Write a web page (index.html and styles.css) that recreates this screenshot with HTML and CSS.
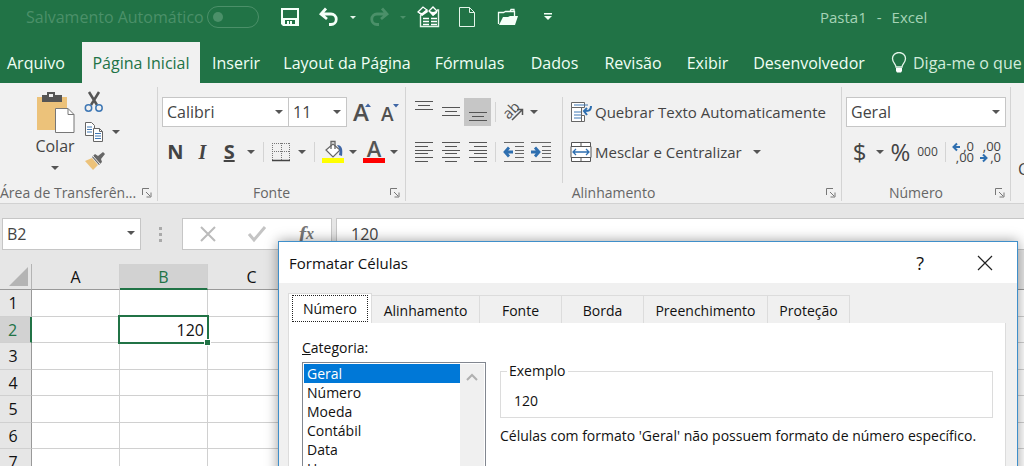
FILE: index.html
```html
<!DOCTYPE html>
<html lang="pt-BR">
<head>
<meta charset="utf-8">
<title>Pasta1 - Excel</title>
<link rel="stylesheet" href="styles.css">
</head>
<body>
<div class="app">
  <header class="titlebar">
    <label class="autosave">Salvamento Automático <input type="checkbox" class="toggle" disabled></label>
    <div class="quick">
      <button class="q q-save" aria-label="Salvar"><svg width="20" height="20" viewBox="0 0 20 20"><path fill="#f4fff8" fill-rule="evenodd" d="M1 1h18v18H3l-2-2zM3 3v8h14V3zM5 13v4h2v-3h2v3h1v-3h2v3h3v-4z"/></svg></button>
      <button class="q q-undo" aria-label="Desfazer"><svg width="22" height="20" viewBox="0 0 22 20"><path d="M8 1.500 3 7l6 5M3 7h10a5 5 0 0 1 0 10.500h-2" fill="none" stroke="#f4fff8" stroke-width="2.800"/></svg></button>
      <span class="caret light"></span>
      <button class="q q-redo" aria-label="Refazer"><svg width="22" height="20" viewBox="0 0 22 20"><path d="m14 1.500 5 5.500-6 5M19 7H9a5 5 0 0 0 0 10.500h2" fill="none" stroke="#4b9069" stroke-width="2.800"/></svg></button>
      <span class="caret dim"></span>
      <button class="q q-form" aria-label="Formulário"><svg width="24" height="22" viewBox="0 0 24 22"><path d="M3.500 9v11.500h18V4H20" fill="none" stroke="#e4f5ea" stroke-width="1.400"/><path d="m1 6 5-5 4 3-5 5zM12 5l4-4 4 4-4 4z" fill="#217346" stroke="#fff" stroke-width="1.300"/><path d="m1 6 4 1 5-4 1 3-6 4zM12 5l4 1 4-1v2l-4 3z" fill="#fff"/><path d="M6 12.500h6M14 12.500h6M6 15.500h6M14 15.500h6M6 18.500h6M14 18.500h6" stroke="#fff" stroke-width="1.300"/></svg></button>
      <button class="q q-new" aria-label="Novo"><svg width="18" height="22" viewBox="0 0 18 22"><path d="M1.500 1.500h10l5 5v14h-15zM11.500 1.500v5h5" fill="none" stroke="#e4f5ea"/></svg></button>
      <button class="q q-open" aria-label="Abrir"><svg width="22" height="18" viewBox="0 0 22 18"><path d="M1.500 16V4.500h5l2-1h9V8M13 3.500l1-2h3v2" fill="none" stroke="#f4fff8" stroke-width="1.300"/><path d="M6 9h5l2-1h8l-3 9H2z" fill="#f4fff8"/></svg></button>
      <button class="q q-more" aria-label="Personalizar"><svg width="10" height="8" viewBox="0 0 10 8"><path d="M1 0h8v1.500H1zM1 3h8L5 7z" fill="#f4fff8"/></svg></button>
    </div>
    <div class="doc-title"><span>Pasta1</span><span>-</span><span>Excel</span></div>
  </header>

  <nav class="tabs">
    <button class="tab first">Arquivo</button>
    <button class="tab active">Página Inicial</button>
    <button class="tab">Inserir</button>
    <button class="tab">Layout da Página</button>
    <button class="tab">Fórmulas</button>
    <button class="tab">Dados</button>
    <button class="tab">Revisão</button>
    <button class="tab">Exibir</button>
    <button class="tab">Desenvolvedor</button>
    <button class="tab tell"><svg width="16" height="22" viewBox="0 0 16 22"><path d="M5 15c0-3-3.500-4-3.500-8.500a6.500 6 0 0 1 13 0C14.500 11 11 12 11 15z" fill="none" stroke="#e4f5ea" stroke-width="1.300"/><path d="M5 16h6v3l-1 1.500H6L5 19z" fill="#fff"/></svg>Diga-me o que</button>
  </nav>

  <section class="ribbon">
    <div class="group clip">
      <div class="tools clip-tools">
        <button class="paste">
          <svg width="40" height="43" viewBox="0 0 40 43"><path d="M2 6h30v33H2z" fill="#ecc27a"/><path d="M7 4h5V1h8v3h7v7H7z" fill="#555"/><path d="M14 3h4v3h-4z" fill="#eee"/><path d="M20.500 17.500H33l6 6v18H20.500z" fill="#fff" stroke="#777"/><path d="M33 17.500v6h6" fill="none" stroke="#777"/></svg>
          <span>Colar</span><span class="caret"></span>
        </button>
        <div class="mini">
          <button aria-label="Recortar"><svg width="20" height="22" viewBox="0 0 20 22"><path d="M5 1l8 13M15 1 7 14" stroke="#555" stroke-width="2.500"/><circle cx="4.500" cy="17" r="3.200" fill="none" stroke="#3f78b5" stroke-width="1.500"/><circle cx="15" cy="17" r="3.200" fill="none" stroke="#3f78b5" stroke-width="1.500"/></svg></button>
          <button class="copy" aria-label="Copiar"><svg width="20" height="22" viewBox="0 0 20 22"><path d="M1.500 1.500h6l3 3v10h-9z" fill="#fff" stroke="#666"/><path d="M3 6h5M3 8.500h5M3 11h5" stroke="#3f78b5"/><path d="M9.500 7.500h6l3 3v10h-9z" fill="#fff" stroke="#666"/><path d="M15.500 7.500v3h3" fill="none" stroke="#666"/><path d="M11 12.500h6M11 15h6M11 17.500h6" stroke="#3f78b5"/></svg><span class="caret"></span></button>
          <button aria-label="Pincel de Formatação"><svg width="22" height="20" viewBox="0 0 22 20"><path d="M1 10l7-3 6 7-5 5z" fill="#ecc27a"/><path d="M8 6l3-3 3 2 5-4 2 2-4 5 1 3-3 3z" fill="#666"/><path d="M9 5l7 8" stroke="#f1f1f1"/></svg></button>
        </div>
      </div>
      <div class="foot foot-left"><span>Área de Transferên...</span><button class="launch" aria-label="Mais opções"><svg width="10" height="10" viewBox="0 0 10 10"><path d="M.5 7V.500H7M4 4l4 4M9 4.500V9H4.500" fill="none" stroke="#777"/></svg></button></div>
    </div>

    <div class="group font">
      <div class="tools">
        <div class="row">
          <span class="combo name"><select aria-label="Fonte"><option>Calibri</option></select></span><span class="combo size"><select aria-label="Tamanho"><option>11</option></select></span>
          <button class="grow" aria-label="Aumentar fonte"><svg width="24" height="26" viewBox="0 0 24 26"><text x="4" y="22" class="big-a">A</text><path d="M16 8h6l-3-3.500z" fill="#3f66a5"/></svg></button>
          <button class="grow" aria-label="Diminuir fonte"><svg width="24" height="26" viewBox="0 0 24 26"><text x="5" y="22" class="small-a">A</text><path d="M17 5h6l-3 3.500z" fill="#3f66a5"/></svg></button>
        </div>
        <div class="row">
          <button class="w27 glyph"><b>N</b></button><button class="w27 glyph ital"><b>I</b></button><button class="w27 glyph under"><b>S</b></button><button class="w16" aria-label="Sublinhado"><span class="caret"></span></button>
          <span class="sep"></span>
          <button class="w27" aria-label="Bordas"><svg width="20" height="20" viewBox="0 0 20 20"><path d="M1.500 1v17M18.500 1v17M1 1.500h18M10.500 1v17M1 9.500h18" stroke="#777" stroke-dasharray="1 1"/><path d="M1 18.500h18" stroke="#444" stroke-width="1.500"/></svg></button><button class="w16" aria-label="Opções de borda"><span class="caret"></span></button>
          <span class="sep"></span>
          <button class="w27" aria-label="Cor de preenchimento"><svg width="24" height="24" viewBox="0 0 24 24"><path d="M5 10l7-6 7 6-7 7z" fill="#fff" stroke="#666" stroke-width="1.200"/><path d="M10 9V1.500h4V9" fill="none" stroke="#666" stroke-width="1.300"/><path d="M16 5c5 0 6 4 5 11l-3-1c1-4 1-6-2-10z" fill="#3f66a5"/><path d="M1 18h22v5H1z" fill="#ff0"/></svg></button><button class="w14" aria-label="Cores"><span class="caret"></span></button>
          <button class="w27" aria-label="Cor da fonte"><svg width="24" height="24" viewBox="0 0 24 24"><text x="12" y="17" class="color-a">A</text><path d="M1 18h22v5H1z" fill="red"/></svg></button><button class="w14" aria-label="Cores da fonte"><span class="caret"></span></button>
        </div>
      </div>
      <div class="foot"><span>Fonte</span><button class="launch" aria-label="Mais opções"><svg width="10" height="10" viewBox="0 0 10 10"><path d="M.5 7V.500H7M4 4l4 4M9 4.500V9H4.500" fill="none" stroke="#777"/></svg></button></div>
    </div>

    <div class="group align">
      <div class="tools align-tools">
        <div class="stack">
          <div class="row">
            <button class="w27" aria-label="Alinhar acima"><svg width="20" height="28"><path d="M1 3.500h18M4 7.500h12M1 11.500h18" stroke="#555"/></svg></button><button class="w27" aria-label="Centralizar"><svg width="20" height="28"><path d="M1 9.500h18M4 13.500h12M1 17.500h18" stroke="#555"/></svg></button><button class="w27 on" aria-label="Alinhar abaixo"><svg width="20" height="28"><path d="M1 14.500h18M4 18.500h12M1 22.500h18" stroke="#555"/></svg></button>
            <span class="sep"></span>
            <button class="w27" aria-label="Orientação"><svg width="24" height="24" viewBox="0 0 24 24"><text x="2" y="17" class="ab" transform="rotate(-45 8 13)">ab</text><path d="M10 20 20 10M15 9.500h5.500V15" fill="none" stroke="#555" stroke-width="1.500"/></svg></button><button class="w14" aria-label="Opções"><span class="caret"></span></button>
          </div>
          <div class="row">
            <button class="w27" aria-label="Esquerda"><svg width="20" height="22"><path d="M1 1.500h18M1 5.500h13M1 9.500h18M1 12.500h13M1 16.500h18M1 20.500h13" stroke="#555"/></svg></button><button class="w27" aria-label="Centro"><svg width="20" height="22"><path d="M1 1.500h18M4 5.500h12M1 9.500h18M4 12.500h12M1 16.500h18M4 20.500h12" stroke="#555"/></svg></button><button class="w27" aria-label="Direita"><svg width="20" height="22"><path d="M1 1.500h18M6 5.500h13M1 9.500h18M6 12.500h13M1 16.500h18M6 20.500h13" stroke="#555"/></svg></button>
            <span class="sep"></span>
            <button class="w27" aria-label="Diminuir recuo"><svg width="22" height="22"><path d="M1 1.500h20M12 5.500h9M12 9.500h9M12 12.500h9M12 16.500h9M1 20.500h20" stroke="#666"/><path d="M10 11H3M6 6.500 2 11l4 4.500" fill="none" stroke="#2e6fb0" stroke-width="2.800"/></svg></button><button class="w27" aria-label="Aumentar recuo"><svg width="22" height="22"><path d="M1 1.500h20M12 5.500h9M12 9.500h9M12 12.500h9M12 16.500h9M1 20.500h20" stroke="#666"/><path d="M1 11h7M5 6.500 9 11l-4 4.500" fill="none" stroke="#2e6fb0" stroke-width="2.800"/></svg></button>
          </div>
        </div>
        <div class="stack wide">
          <div class="row"><button class="texty"><svg width="22" height="22" viewBox="0 0 22 22"><path d="M1.500 1.500h13v5h-13zM1.500 6.500h10v14h-10zM11.500 14.500h3v6h-13" fill="#fff" stroke="#666"/><path d="M4 4h14M4 11h7M4 14h7M4 17h7" stroke="#3f78b5"/><path d="M21 5c0 5-3 5-6 5M17 7l-3 3 3 4" fill="none" stroke="#2e6fb0" stroke-width="2"/></svg>Quebrar Texto Automaticamente</button></div>
          <div class="row"><button class="texty"><svg width="22" height="22" viewBox="0 0 22 22"><path d="M1.500 1.500h19v19h-19zM11 1v4M11 17v4" fill="#fff" stroke="#555"/><path d="M1 5.500h20v11H1z" fill="#fff" stroke="#555"/><path d="M3 11h16M6 8l-3 3 3 3M16 8l3 3-3 3" fill="none" stroke="#2e6fb0" stroke-width="1.300"/></svg>Mesclar e Centralizar<span class="caret"></span></button></div>
        </div>
      </div>
      <div class="foot"><span>Alinhamento</span><button class="launch" aria-label="Mais opções"><svg width="10" height="10" viewBox="0 0 10 10"><path d="M.5 7V.500H7M4 4l4 4M9 4.500V9H4.500" fill="none" stroke="#777"/></svg></button></div>
    </div>

    <div class="group num">
      <div class="tools">
        <div class="row"><span class="combo fmt"><select aria-label="Formato"><option>Geral</option></select></span></div>
        <div class="row">
          <button class="w27 money">$</button><button class="w14" aria-label="Moedas"><span class="caret"></span></button><button class="w27 money">%</button><button class="w27 thou">000</button>
          <span class="sep"></span>
          <button class="w27 dec" aria-label="Aumentar casas decimais"><svg width="24" height="24" viewBox="0 0 24 24"><path d="M8 7H2M5 3.500 1.500 7 5 10.500" fill="none" stroke="#2e6fb0" stroke-width="2"/><text x="22" y="11">,0</text><text x="22" y="22">,00</text></svg></button><button class="w27 dec" aria-label="Diminuir casas decimais"><svg width="24" height="24" viewBox="0 0 24 24"><path d="M1 18h6M4 14.500 7.500 18 4 21.500" fill="none" stroke="#2e6fb0" stroke-width="2"/><text x="22" y="11">,00</text><text x="22" y="22">,0</text></svg></button>
        </div>
      </div>
      <div class="foot"><span>Número</span><button class="launch" aria-label="Mais opções"><svg width="10" height="10" viewBox="0 0 10 10"><path d="M.5 7V.500H7M4 4l4 4M9 4.500V9H4.500" fill="none" stroke="#777"/></svg></button></div>
    </div>
    <div class="group rest"><span>C</span></div>
  </section>

  <section class="formula">
    <span class="combo cellref"><select aria-label="Caixa de nome"><option>B2</option></select></span>
    <span class="dots"><i></i><i></i><i></i></span>
    <div class="fx">
      <button aria-label="Cancelar"><svg width="18" height="18"><path d="M2 2l14 14M16 2 2 16" stroke="#bbb" stroke-width="2"/></svg></button>
      <button aria-label="Inserir"><svg width="20" height="18"><path d="m2 9 5 6L18 2" fill="none" stroke="#c4c4c4" stroke-width="3"/></svg></button>
      <button class="fxb">f<small>x</small></button>
    </div>
    <input class="entry" aria-label="Barra de fórmulas" value="120">
  </section>

  <table class="sheet">
    <thead><tr><th class="corner"><svg width="20" height="20"><path d="M19 0v19H0z" fill="#b4b4b4"/></svg></th><th>A</th><th class="sel">B</th><th>C</th><th></th><th></th><th></th><th></th><th></th><th></th><th></th><th></th><th></th></tr></thead>
    <tbody>
      <tr><th>1</th><td></td><td></td><td></td><td></td><td></td><td></td><td></td><td></td><td></td><td></td><td></td><td></td></tr>
      <tr><th class="sel">2</th><td></td><td class="cur"><div>120</div></td><td></td><td></td><td></td><td></td><td></td><td></td><td></td><td></td><td></td><td></td></tr>
      <tr><th>3</th><td></td><td></td><td></td><td></td><td></td><td></td><td></td><td></td><td></td><td></td><td></td><td></td></tr>
      <tr><th>4</th><td></td><td></td><td></td><td></td><td></td><td></td><td></td><td></td><td></td><td></td><td></td><td></td></tr>
      <tr><th>5</th><td></td><td></td><td></td><td></td><td></td><td></td><td></td><td></td><td></td><td></td><td></td><td></td></tr>
      <tr><th>6</th><td></td><td></td><td></td><td></td><td></td><td></td><td></td><td></td><td></td><td></td><td></td><td></td></tr>
      <tr><th>7</th><td></td><td></td><td></td><td></td><td></td><td></td><td></td><td></td><td></td><td></td><td></td><td></td></tr>
    </tbody>
  </table>

  <div class="dialog" role="dialog" aria-labelledby="dlg-title">
    <div class="dlg-bar"><h1 id="dlg-title">Formatar Células</h1><button class="help">?</button><button class="close" aria-label="Fechar"><svg width="16" height="16"><path d="M1 1l14 14M15 1 1 15" stroke="#222" stroke-width="1.200"/></svg></button></div>
    <div class="dlg-tabs" role="tablist">
      <button role="tab" aria-selected="true" class="dt on"><span>Número</span></button><button role="tab" class="dt t2">Alinhamento</button><button role="tab" class="dt">Fonte</button><button role="tab" class="dt">Borda</button><button role="tab" class="dt t5">Preenchimento</button><button role="tab" class="dt">Proteção</button>
    </div>
    <div class="page">
      <div class="cats">
        <span id="cat-label"><u>C</u>ategoria:</span>
        <div class="listbox">
          <ul role="listbox" aria-labelledby="cat-label"><li role="option" class="picked" aria-selected="true">Geral</li><li role="option">Número</li><li role="option">Moeda</li><li role="option">Contábil</li><li role="option">Data</li><li role="option">Hora</li></ul>
          <button class="scroll" aria-label="Rolar para cima"><svg width="12" height="9"><path d="M1 7l5-5 5 5" fill="none" stroke="#b0b0b0" stroke-width="2"/></svg></button>
        </div>
      </div>
      <div class="detail">
        <fieldset><legend>Exemplo</legend>120</fieldset>
        <p>Células com formato 'Geral' não possuem formato de número específico.</p>
      </div>
    </div>
  </div>
</div>
</body>
</html>
```
FILE: styles.css
```css
* { box-sizing: border-box; }
body { margin: 0; overflow: hidden; font: 16px/20px "Open Sans", "Noto Sans", sans-serif; color: #444; }
button, select, input { font: inherit; color: inherit; }
button { border: 0; padding: 0; background: none; display: flex; align-items: center; justify-content: center; white-space: nowrap; }
svg { display: block; flex: none; }
.app { position: relative; height: 100vh; overflow: hidden; background: #e6e6e6; }
.caret { flex: none; width: 0; height: 0; border: 4px solid transparent; border-top-color: #555; border-bottom: 0; }
.caret.light { border-width: 3px 3px 0; border-top-color: #e4f5ea; }
.caret.dim { border-width: 3px 3px 0; border-top-color: #4b9069; }

.titlebar { display: flex; align-items: center; height: 42px; padding: 0 0 8px 26px; background: #217346; color: #4b9069; }
.autosave { display: flex; align-items: center; justify-content: space-between; width: 233px; white-space: nowrap; }
.toggle { appearance: none; width: 52px; height: 22px; margin: 0; padding: 5px; border: 1px solid #4b9069; border-radius: 11px; }
.toggle::before { content: ""; display: block; width: 10px; height: 10px; border-radius: 5px; background: #4b9069; }
.quick { display: flex; align-items: center; margin-left: 21px; }
.q-undo { margin: 0 10px 0 18px; }
.q-redo { margin: 0 10px 0 12px; }
.q-form { margin-left: 11px; }
.q-new { margin-left: 17px; }
.q-open { margin-left: 21px; }
.q-more { margin-left: 24px; }
.doc-title { display: flex; gap: 10px; margin-left: 267px; color: #a5d3b6; font-size: 15px; white-space: nowrap; }

.tabs { display: grid; grid-template-columns: 82px 118px 72px 150px 95px 75px 82px 67px 136px 1fr; height: 41px; background: #217346; color: #f0fff5; overflow: hidden; }
.tab.first { padding-left: 7px; justify-content: flex-start; }
.tab.active { background: #f1f1f1; color: #217346; }
.tab.tell { gap: 6px; padding-left: 14px; justify-content: flex-start; color: #d2ecdc; }

.ribbon { display: flex; height: 121px; padding-top: 4px; background: #f1f1f1; border-bottom: 1px solid #d2d2d2; overflow: hidden; }
.group { display: flex; flex: none; flex-direction: column; height: 114px; border-right: 1px solid #d4d4d4; }
.tools { display: flex; flex: 1; flex-direction: column; gap: 11px; padding: 10px 4px 0; }
.row { display: flex; align-items: center; height: 29px; }
.foot { display: grid; grid-template-columns: 1fr 20px; height: 18px; align-items: center; font-size: 14px; color: #666; white-space: nowrap; }
.foot span { text-align: center; }
.foot-left span { text-align: left; }
.clip { width: 158px; }
.font { width: 248px; }
.align { width: 436px; }
.num { width: 169px; }
.rest { width: 100px; border: 0; padding: 72px 0 0 7px; }
.clip-tools { flex-direction: row; padding: 4px 0 0 34px; gap: 8px; }
.paste { flex-direction: column; justify-content: flex-start; width: 42px; gap: 2px; }
.paste .caret { margin-top: 8px; }
.mini { display: flex; flex-direction: column; gap: 8px; }
.mini button { justify-content: flex-start; }
.copy { gap: 8px; }
.combo { position: relative; display: block; height: 30px; border: 1px solid #c6c6c6; background: #fff; }
.combo select { appearance: none; width: 100%; height: 100%; padding: 0 4px; border: 0; background: none; }
.combo::after { content: ""; position: absolute; right: 5px; top: 12px; border: 4px solid transparent; border-top-color: #555; border-bottom: 0; pointer-events: none; }
.name { width: 127px; }
.size { width: 59px; margin-left: -1px; }
.fmt { width: 161px; }
.grow { width: 27px; }
.w27 { width: 27px; height: 28px; }
.w16 { width: 16px; height: 28px; }
.w14 { width: 14px; height: 28px; }
.on { background: #c6c6c6; }
.sep { width: 1px; height: 20px; margin: 0 4px; background: #d4d4d4; }
.glyph { font-size: 20px; }
.ital { font-family: "Liberation Serif", serif; font-style: italic; }
.under { text-decoration: underline; }
.big-a { font-size: 24px; font-weight: 600; fill: #505050; }
.small-a { font-size: 19px; font-weight: 600; fill: #505050; }
.color-a { font-size: 22px; font-weight: 600; fill: #555; text-anchor: middle; }
.ab { font-size: 15px; fill: #555; }
.align-tools { flex-direction: row; gap: 0; }
.stack { display: flex; flex-direction: column; gap: 11px; width: 152px; }
.wide { flex: 1; padding-left: 7px; border-left: 1px solid #d4d4d4; }
.texty { gap: 3px; font-size: 15px; }
.texty .caret { margin-left: 8px; }
.money { font-size: 24px; }
.thou { font-size: 12px; }
.dec { font-size: 13px; }
.dec text { fill: #444; text-anchor: end; }

.formula { display: flex; align-items: center; height: 60px; padding-left: 2px; }
.cellref { width: 139px; height: 32px; }
.dots { display: flex; flex-direction: column; gap: 3px; margin: 0 20px 0 18px; }
.dots i { width: 3px; height: 3px; background: #aaa; }
.fx { display: flex; align-items: center; width: 150px; height: 32px; border: 1px solid #c6c6c6; background: #fff; }
.fx button { width: 50px; }
.fxb { font: italic bold 22px "Liberation Serif", serif; color: #777; }
.fxb small { font-size: 16px; }
.entry { flex: 1; height: 32px; margin-left: 4px; padding: 0 14px; border: 1px solid #c6c6c6; border-right: 0; background: #fff; }

.sheet { table-layout: fixed; width: 1088px; border-collapse: separate; border-spacing: 0; color: #111; }
.sheet th, .sheet td { height: 26px; padding: 0; border-right: 1px solid #d0d0d0; border-bottom: 1px solid #d0d0d0; }
.sheet th { width: 88px; font-weight: 400; background: #e6e6e6; }
.sheet tbody th { border-right-color: #999; padding-right: 5px; }
.sheet tbody tr:nth-child(odd) > * { height: 27px; }
.sheet thead th { height: 26px; padding-top: 1px; border-bottom-color: #999; }
.sheet .corner { width: 32px; border-right-color: #b4b4b4; }
.corner svg { margin-left: 9px; }
.sheet .sel { background: #d2d2d2; color: #217346; }
.sheet thead .sel { border-bottom: 2px solid #217346; }
.sheet tbody .sel { border-right: 2px solid #217346; }
.sheet td { background: #fff; }
.cur { position: relative; }
.cur div { position: absolute; inset: -2px -2px -2px -2px; padding: 3px 3px 0 0; border: 2px solid #217346; text-align: right; }
.cur div::after { content: ""; position: absolute; right: -3px; bottom: -3px; width: 5px; height: 5px; background: #217346; box-shadow: 0 0 0 1px #fff; }

.dialog { position: absolute; left: 278px; right: 6px; top: 241px; bottom: -120px; display: flex; flex-direction: column; border: 1px solid #3f8fca; background: #f0f0f0; color: #111; font-size: 14px; box-shadow: 0 0 12px rgba(0,0,0,.4); }
.dlg-bar { display: flex; align-items: center; height: 41px; padding: 0 24px 0 10px; background: #fff; }
.dlg-bar h1 { flex: 1; margin: 0; font-size: 15px; font-weight: 400; }
.help { font-size: 18px; margin-right: 53px; }
.dlg-tabs { display: flex; align-items: flex-end; height: 40px; padding-left: 9px; }
.dt { width: 82px; height: 28px; padding-top: 2px; border: 1px solid #dcdcdc; border-width: 1px 1px 0 0; }
.dt.on { width: 84px; height: 30px; padding: 3px; background: #fff; border-left-width: 1px; }
.dt.on span { flex: 1; border: 1px dotted #222; line-height: 25px; }
.t2 { width: 108px; }
.t5 { width: 124px; }
.page { display: flex; flex: 1; gap: 14px; margin: 0 11px 0 9px; padding: 15px 12px 0 13px; background: #fff; border: 1px solid #dcdcdc; border-top: 0; }
.cats { display: flex; flex-direction: column; gap: 4px; width: 184px; }
.listbox { display: flex; flex: 1; border: 1px solid #828790; padding: 1px; }
.listbox ul { flex: 1; margin: 0; padding: 0; list-style: none; }
.listbox li { height: 19px; padding-left: 3px; line-height: 19px; }
.listbox .picked { background: #0078d7; color: #fff; }
.scroll { width: 24px; align-items: flex-start; padding-top: 9px; background: #f0f0f0; }
.detail { flex: 1; padding-top: 23px; }
fieldset { margin: 0; padding: 10px 13px 6px; border: 1px solid #dcdcdc; }
fieldset legend { margin-left: -7px; padding: 0 3px 0 2px; line-height: 20px; }
.detail p { margin: 8px 0 0; white-space: nowrap; }
```
